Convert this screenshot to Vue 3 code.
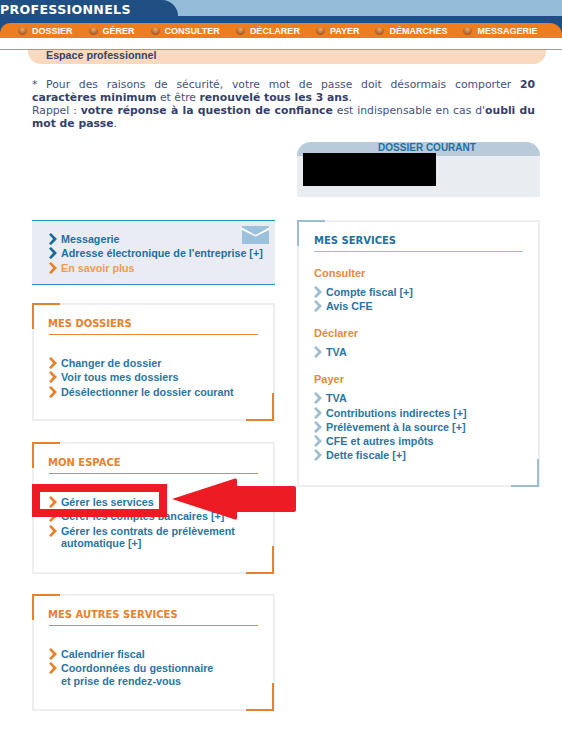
<script setup>
const nav = ['DOSSIER', 'GÉRER', 'CONSULTER', 'DÉCLARER', 'PAYER', 'DÉMARCHES', 'MESSAGERIE']

const leftCards = [
  {
    title: 'MES DOSSIERS',
    links: [['Changer de dossier'], ['Voir tous mes dossiers'], ['Désélectionner le dossier courant']]
  },
  {
    title: 'MON ESPACE',
    links: [['Gérer les services'], ['Gérer les comptes bancaires [+]'], ['Gérer les contrats de prélèvement', 'automatique [+]']]
  },
  {
    title: 'MES AUTRES SERVICES',
    links: [['Calendrier fiscal'], ['Coordonnées du gestionnaire', 'et prise de rendez-vous']]
  }
]

const services = [
  { name: 'Consulter', links: ['Compte fiscal [+]', 'Avis CFE'] },
  { name: 'Déclarer', links: ['TVA'] },
  { name: 'Payer', links: ['TVA', 'Contributions indirectes [+]', 'Prélèvement à la source [+]', 'CFE et autres impôts', 'Dette fiscale [+]'] }
]
</script>

<template>
  <div class="page">
    <header class="top">
      <div class="brand">PROFESSIONNELS</div>
    </header>
    <nav class="nav">
      <ul>
        <li v-for="item in nav" :key="item"><i class="dot"></i>{{ item }}</li>
      </ul>
    </nav>
    <div class="crumb"><span>Espace professionnel</span></div>

    <main class="content">
      <div class="notice">
        <p class="just">* Pour des raisons de sécurité, votre mot de passe doit désormais comporter <b>20</b></p>
        <p><b>caractères minimum</b> et être <b>renouvelé tous les 3 ans</b>.</p>
        <p class="just">Rappel : <b>votre réponse à la question de confiance</b> est indispensable en cas d'<b>oubli du</b></p>
        <p><b>mot de passe</b>.</p>
      </div>

      <div class="current-row">
        <section class="current">
          <h3>DOSSIER COURANT</h3>
          <div class="redacted"></div>
        </section>
      </div>

      <div class="columns">
        <div class="col">
          <section class="mail">
            <svg class="envelope" width="27" height="18" viewBox="0 0 27 18">
              <rect width="27" height="18" fill="#9cc1dc" />
              <path d="M0 1.5 L13.5 9 L27 1.5 L27 4 L13.5 10.5 L0 4 Z" fill="#fff" />
            </svg>
            <ul class="links">
              <li><svg class="chev" viewBox="0 0 8 12"><polygon points="0,1.5 2,0 8,6 2,12 0,10.5 4,6" fill="#1b6a9a" /></svg>Messagerie</li>
              <li><svg class="chev" viewBox="0 0 8 12"><polygon points="0,1.5 2,0 8,6 2,12 0,10.5 4,6" fill="#1b6a9a" /></svg>Adresse électronique de l'entreprise [+]</li>
              <li class="more"><svg class="chev" viewBox="0 0 8 12"><polygon points="0,1.5 2,0 8,6 2,12 0,10.5 4,6" fill="#e8812c" /></svg>En savoir plus</li>
            </ul>
          </section>

          <section v-for="card in leftCards" :key="card.title" class="card">
            <h2>{{ card.title }}</h2>
            <ul class="links">
              <li v-for="link in card.links" :key="link[0]">
                <svg class="chev" viewBox="0 0 8 12"><polygon points="0,1.5 2,0 8,6 2,12 0,10.5 4,6" fill="#e8812c" /></svg>
                <span>{{ link[0] }}<template v-if="link[1]"><br />{{ link[1] }}</template></span>
              </li>
            </ul>
          </section>
        </div>

        <div class="col">
          <section class="card blue">
            <h2>MES SERVICES</h2>
            <div v-for="group in services" :key="group.name" class="group">
              <h4>{{ group.name }}</h4>
              <ul class="links">
                <li v-for="link in group.links" :key="link">
                  <svg class="chev" viewBox="0 0 8 12"><polygon points="0,1.5 2,0 8,6 2,12 0,10.5 4,6" fill="#9dbdd2" /></svg>
                  <span>{{ link }}</span>
                </li>
              </ul>
            </div>
          </section>
        </div>
      </div>
    </main>

    <!-- annotation drawn over the page -->
    <div class="mark-box"></div>
    <svg class="mark-arrow" width="126" height="44" viewBox="0 0 126 44">
      <path d="M1 21 L64 0.5 Q66 0 66 2 L66 8 L123 8 Q125 8 125 10 L125 32 Q125 34 123 34 L66 34 L66 40 Q66 42 64 41.5 Z" fill="#ed1c24" />
    </svg>
  </div>
</template>

<style scoped>
.page { position: relative; width: 562px; height: 735px; overflow: hidden; background: #fff; font-family: "Liberation Sans", Arial, sans-serif; }
ul { list-style: none; margin: 0; padding: 0; }

.top { height: 16px; background: #93bdd9; }
.brand { width: 178px; height: 16px; padding-top: 3px; background: #1f4f83; border-top-right-radius: 16px; color: #fff; font: bold 12.6px/13px "DejaVu Sans", sans-serif; letter-spacing: 0.3px; box-sizing: border-box; }

.nav { background: #1f4f83; padding-top: 7px; }
.nav ul { display: flex; height: 15px; background: #ee7d1f; border-radius: 10px 12px 0 0; padding-left: 18px; gap: 16px; align-items: center; }
.nav li { display: flex; align-items: center; color: #fff; font-size: 9px; font-weight: bold; }
.dot { width: 9px; height: 8px; border-radius: 50%; margin-right: 5px; background: radial-gradient(circle at 50% 30%, #f0a868, #a8551a 75%); }

.crumb { margin-top: 11px; border-top: 1px solid #e8873a; height: 15px; }
.crumb span { display: block; height: 14px; margin: 0 16px 0 28px; padding-left: 18px; background: #fad9bf; border-radius: 0 0 13px 13px; color: #30466b; font-size: 10.7px; font-weight: bold; line-height: 11px; }

.content { padding: 13px 22px 0 32px; }
.notice { width: 503px; font: 10.8px/13px "DejaVu Sans", Verdana, sans-serif; color: #44507c; }
.notice p { margin: 0; }
.notice p.just { text-align: justify; text-align-last: justify; }
.notice b { color: #343f6a; }

.current-row { margin-top: 12px; display: flex; justify-content: flex-end; width: 508px; }
.current { position: relative; width: 243px; height: 55px; background: #e9edf2; border-radius: 14px 14px 0 0; overflow: hidden; }
.current h3 { margin: 0; height: 14px; background: #b9cbdb; color: #23709f; font-size: 10px; line-height: 12px; font-weight: bold; text-align: center; padding-left: 17px; box-sizing: border-box; }
.redacted { position: absolute; left: 6px; top: 11px; width: 133px; height: 33px; background: #000; }

.columns { display: grid; grid-template-columns: 243px 243px; column-gap: 22px; margin-top: 23px; }
.col { display: flex; flex-direction: column; }

.links li { display: flex; font-size: 10.75px; line-height: 12.5px; font-weight: bold; color: #2a75a3; margin-bottom: 1.75px; }
.chev { flex: none; width: 8px; height: 12px; margin: 0 4px 0 0; }

.mail { position: relative; background: #e9edf3; border-top: 1px solid #2b93bb; border-bottom: 1px solid #2b93bb; padding: 12px 0 0 17px; height: 51px; }
.mail .links li { color: #1f6f9f; }
.mail .links li.more { color: #ef9a52; }
.envelope { position: absolute; right: 6px; top: 5px; }

.card { position: relative; box-sizing: border-box; border: 2px solid #eceef0; padding: 12px 15px 0 15px; margin-top: 18px; height: 118px; }
.col .card:nth-of-type(3) { margin-top: 21px; height: 132px; }
.col .card:nth-of-type(4) { margin-top: 20px; height: 117px; }
.card h2 { margin: 0 0 22px; height: 15px; border-bottom: 1px solid #e8873a; color: #e8812c; font-size: 10px; line-height: 14px; font-family: "DejaVu Sans", sans-serif; font-weight: bold; padding-bottom: 2px; text-indent: -1px; }
.card::before { content: ""; position: absolute; left: -2px; top: -2px; width: 26px; height: 24px; border-left: 2px solid #e8812c; border-top: 2px solid #e8812c; }
.card::after { content: ""; position: absolute; right: -1px; bottom: -2px; width: 26px; height: 26px; border-right: 2px solid #e8812c; border-bottom: 2px solid #e8812c; }

.card.blue { height: 267px; margin-top: 0; }
.card.blue::before, .card.blue::after { border-color: #9dbdd2; }
.card.blue h2 { color: #23709f; border-bottom-color: #9dbdd2; margin-bottom: 15px; text-indent: 0; }
.group { margin-bottom: 14.5px; }
.group h4 { margin: 0 0 6px; color: #e38a3d; font-size: 11px; line-height: 13px; font-weight: bold; }
.card.blue .links li { color: #2a75a3; }

.mark-box { position: absolute; left: 32px; top: 484px; width: 135px; height: 33px; box-sizing: border-box; border: 8px solid #ed1c24; }
.mark-arrow { position: absolute; left: 171px; top: 478px; }
</style>
